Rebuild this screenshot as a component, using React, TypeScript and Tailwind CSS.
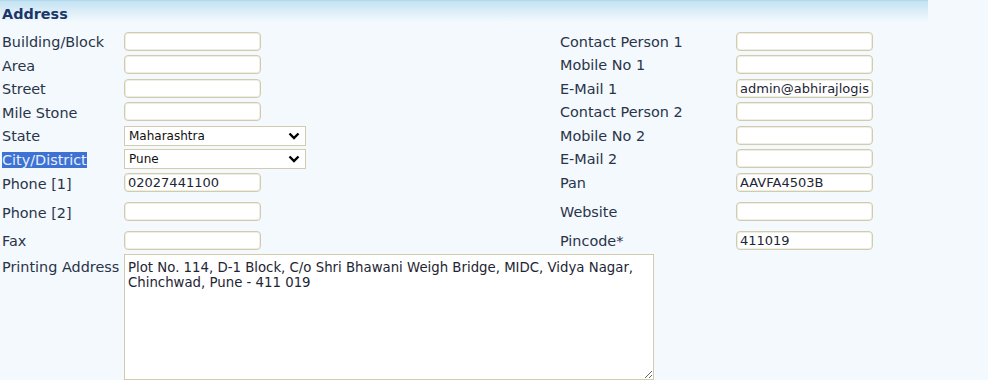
import React from "react";

const font = { fontFamily: '"DejaVu Sans", Verdana, sans-serif' };

function TextBox({ value = "" }: { value?: string }) {
  return (
    <input
      readOnly
      value={value}
      className="h-[19px] w-[137px] rounded-[4px] border border-[#d2ccae] bg-white px-[3px] text-[13px] text-[#1e2533] outline-none shadow-[inset_0_0_0_1px_#f0eee4]"
      style={font}
    />
  );
}

function SelectBox({ value }: { value: string }) {
  return (
    <div className="flex h-[20px] w-[182px] items-center justify-between border border-[#d2ccae] bg-white pl-[4px] pr-[5px] text-[12px] text-[#111]">
      <span>{value}</span>
      <svg width="12" height="8" viewBox="0 0 12 8">
        <polyline points="1.5,1.5 6,6 10.5,1.5" fill="none" stroke="#000" strokeWidth="2.4" />
      </svg>
    </div>
  );
}

type Row = { h: string; l1: React.ReactNode; f1: React.ReactNode; l2: string; f2: React.ReactNode };

const rows: Row[] = [
  { h: "h-[23px]", l1: "Building/Block", f1: <TextBox />, l2: "Contact Person 1", f2: <TextBox /> },
  { h: "h-[24px]", l1: "Area", f1: <TextBox />, l2: "Mobile No 1", f2: <TextBox /> },
  { h: "h-[23px]", l1: "Street", f1: <TextBox />, l2: "E-Mail 1", f2: <TextBox value="admin@abhirajlogistics.com" /> },
  { h: "h-[24px]", l1: "Mile Stone", f1: <TextBox />, l2: "Contact Person 2", f2: <TextBox /> },
  { h: "h-[23px]", l1: "State", f1: <SelectBox value="Maharashtra" />, l2: "Mobile No 2", f2: <TextBox /> },
  {
    h: "h-[24px]",
    l1: <span className="bg-[#3d72d4] text-[#e8eefa]">City/District</span>,
    f1: <SelectBox value="Pune" />,
    l2: "E-Mail 2",
    f2: <TextBox />,
  },
  { h: "h-[24px]", l1: "Phone [1]", f1: <TextBox value="02027441100" />, l2: "Pan", f2: <TextBox value="AAVFA4503B" /> },
  { h: "h-[34px]", l1: "Phone [2]", f1: <TextBox />, l2: "Website", f2: <TextBox /> },
  { h: "h-[23px]", l1: "Fax", f1: <TextBox />, l2: "Pincode*", f2: <TextBox value="411019" /> },
];

export default function App() {
  return (
    <div className="h-[380px] w-[988px] overflow-hidden bg-[#f4f9fd] text-[14.4px] text-[#29344a]" style={font}>
      <div className="h-[22px] w-[928px] border-t border-[#b1d8ec] bg-gradient-to-b from-[#c3e3f2] to-[#f4f9fd] pl-[2px] pt-[3px]">
        <span className="font-bold text-[#1b3668]">Address</span>
      </div>
      <div className="pt-[8px]">
        {rows.map((r, i) => (
          <div key={i} className={`flex items-center ${r.h}`}>
            <div className="w-[124px] pl-[2px] pt-[2px] leading-[17px]">{r.l1}</div>
            <div className="w-[436px]">{r.f1}</div>
            <div className="w-[176px] pt-[2px]">{r.l2}</div>
            <div>{r.f2}</div>
          </div>
        ))}
        <div className="flex pt-[2px]">
          <div className="w-[124px] pl-[2px] pt-[3px]">Printing Address</div>
          <textarea
            readOnly
            className="h-[126px] w-[530px] border border-[#d2ccae] bg-white px-[3px] py-[5px] text-[13.3px] leading-[15px] text-[#1e2533] outline-none"
            style={font}
            value={"Plot No. 114, D-1 Block, C/o Shri Bhawani Weigh Bridge, MIDC, Vidya Nagar,\nChinchwad, Pune - 411 019"}
          />
        </div>
      </div>
    </div>
  );
}
